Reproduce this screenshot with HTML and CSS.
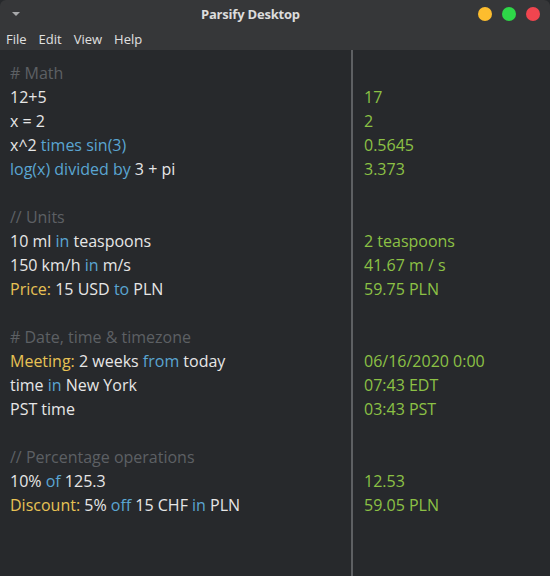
FILE: index.html
```html
<!DOCTYPE html>
<html>
<head>
<meta charset="utf-8">
<link rel="stylesheet" href="styles.css">
</head>
<body>
<div class="window">
  <div class="titlebar">
    <div class="tb-left"><span class="arrow"></span></div>
    <div class="title">Parsify Desktop</div>
    <div class="tb-right">
      <span class="dot yellow"></span>
      <span class="dot green"></span>
      <span class="dot red"></span>
    </div>
  </div>
  <div class="menubar">
    <span class="menu">File</span>
    <span class="menu">Edit</span>
    <span class="menu">View</span>
    <span class="menu">Help</span>
  </div>
  <div class="editor">
    <div class="input">
      <div class="line c"># Math</div>
      <div class="line">12+5</div>
      <div class="line">x = 2</div>
      <div class="line">x^2 <span class="k">times sin(3)</span></div>
      <div class="line"><span class="k">log(x) divided by</span> 3 + pi</div>
      <div class="line"></div>
      <div class="line c">// Units</div>
      <div class="line">10 ml <span class="k">in</span> teaspoons</div>
      <div class="line">150 km/h <span class="k">in</span> m/s</div>
      <div class="line"><span class="v">Price:</span> 15 USD <span class="k">to</span> PLN</div>
      <div class="line"></div>
      <div class="line c"># Date, time &amp; timezone</div>
      <div class="line"><span class="v">Meeting:</span> 2 weeks <span class="k">from</span> today</div>
      <div class="line">time <span class="k">in</span> New York</div>
      <div class="line">PST time</div>
      <div class="line"></div>
      <div class="line c">// Percentage operations</div>
      <div class="line">10% <span class="k">of</span> 125.3</div>
      <div class="line"><span class="v">Discount:</span> 5% <span class="k">off</span> 15 CHF <span class="k">in</span> PLN</div>
    </div>
    <div class="divider"></div>
    <div class="output">
      <div class="line"></div>
      <div class="line">17</div>
      <div class="line">2</div>
      <div class="line">0.5645</div>
      <div class="line">3.373</div>
      <div class="line"></div>
      <div class="line"></div>
      <div class="line">2 teaspoons</div>
      <div class="line">41.67 m / s</div>
      <div class="line">59.75 PLN</div>
      <div class="line"></div>
      <div class="line"></div>
      <div class="line">06/16/2020 0:00</div>
      <div class="line">07:43 EDT</div>
      <div class="line">03:43 PST</div>
      <div class="line"></div>
      <div class="line"></div>
      <div class="line">12.53</div>
      <div class="line">59.05 PLN</div>
    </div>
  </div>
</div>
</body>
</html>
```

FILE: styles.css
```css
html, body {
  margin: 0;
  padding: 0;
  background: #27292c;
}
.window {
  width: 550px;
  height: 576px;
  display: flex;
  flex-direction: column;
  background: #27292c;
  border-radius: 6px 6px 0 0;
  overflow: hidden;
  font-family: "Open Sans", "DejaVu Sans", sans-serif;
}
.titlebar {
  height: 27px;
  background: #363739;
  display: grid;
  grid-template-columns: 201px auto 1fr;
  align-items: center;
}
.tb-left {
  padding-left: 12px;
  display: flex;
  align-items: center;
}
.arrow {
  width: 0;
  height: 0;
  border-left: 4px solid transparent;
  border-right: 4px solid transparent;
  border-top: 4px solid #a8a9ab;
  margin-top: 1px;
}
.title {
  color: #dcdcdc;
  font-size: 13px;
  font-weight: 700;
  padding-top: 1px;
  letter-spacing: -0.2px;
}
.tb-right {
  display: flex;
  justify-content: flex-end;
  gap: 10px;
  padding-right: 10px;
}
.dot {
  width: 14px;
  height: 14px;
  border-radius: 50%;
}
.yellow { background: #fdbd2e; }
.green { background: #2ed748; }
.red { background: #f0454f; }
.menubar {
  height: 23px;
  background: #363739;
  display: flex;
  align-items: center;
  padding-left: 6px;
  gap: 12px;
  color: #e0e0e0;
  font-size: 13px;
}
.editor {
  flex: 1;
  display: grid;
  grid-template-columns: 351px 2px 1fr;
  font-size: 16px;
  line-height: 24px;
}
.input {
  padding: 11px 0 0 10px;
  color: #e6e6e6;
}
.output {
  padding: 11px 0 0 11px;
  color: #8cc145;
}
.divider {
  background: #5e6063;
}
.line {
  height: 24px;
  white-space: pre;
}
.c { color: #5d6064; }
.k { color: #5aa5d2; }
.v { color: #e7c254; }
```
